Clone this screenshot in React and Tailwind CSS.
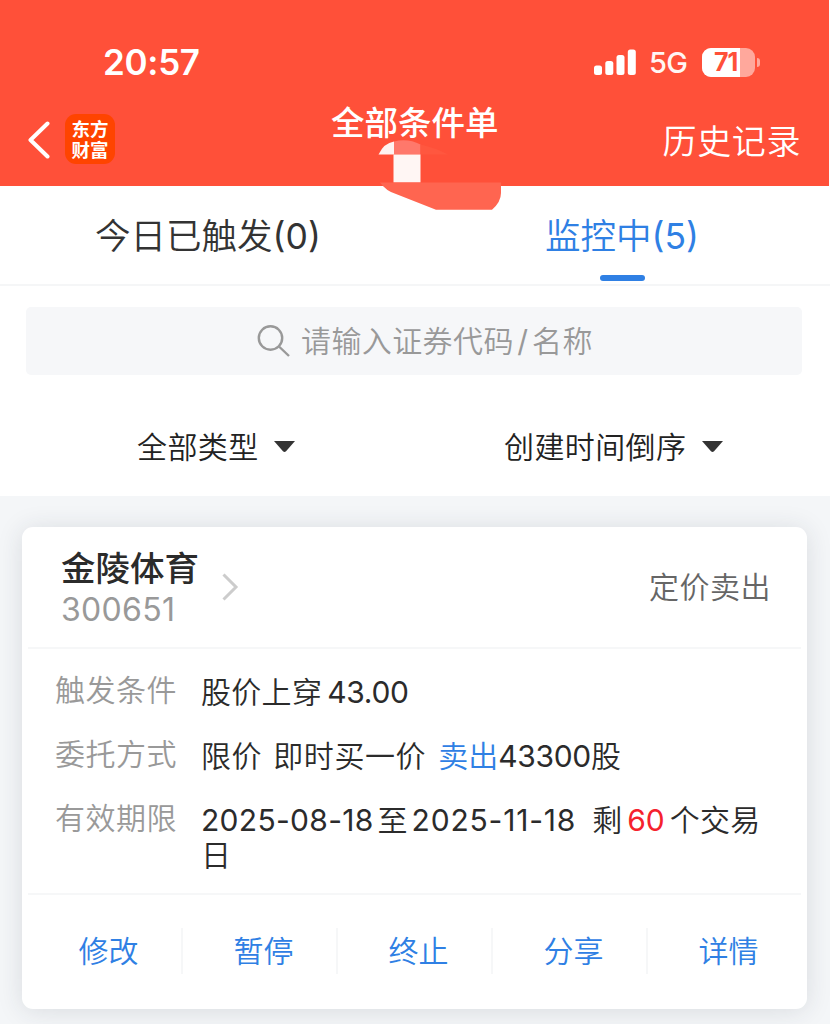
function Caret() {
  return (
    <svg width="21" height="12" viewBox="0 0 21 12" fill="#333">
      <path d="M0 0H21L12 10.2Q10.5 11.8 9 10.2Z" />
    </svg>
  );
}

function Num({ children, className = "" }) {
  return <span className={"font-normal " + className}>{children}</span>;
}

function StatusBar() {
  return (
    <div className="flex h-[92px] items-center pt-[32px] pl-[103px] pr-[69px] justify-between">
      <span className="text-[35px] leading-[60px] font-semibold tracking-[-0.3px]">20:57</span>
      <div className="flex items-center">
        <svg width="42" height="27" viewBox="0 0 42 27" fill="white">
          <rect x="0" y="16.500" width="8" height="9.500" rx="2.500" />
          <rect x="11.300" y="12" width="8" height="14" rx="2.500" />
          <rect x="22.500" y="6" width="8" height="20" rx="2.500" />
          <rect x="33.800" y="0.500" width="8" height="25.500" rx="2.500" />
        </svg>
        <span className="mt-[2px] ml-[13px] w-[40px] text-[29px] leading-[60px] font-medium tracking-[-0.6px] opacity-95">5G</span>
        <div className="ml-[13px] relative flex h-[29px] w-[53px] items-center overflow-hidden rounded-[9px] bg-white/50">
          <div className="h-full w-[38px] bg-white" />
          <span className="absolute left-[12px] text-[25px] leading-[29px] font-bold tracking-[-1px] text-[#ff5039]">71</span>
        </div>
        <div className="ml-[2px] h-[9px] w-[3px] rounded-r-full bg-white/50" />
      </div>
    </div>
  );
}

function NavBar() {
  return (
    <div className="relative flex h-[94px] items-start">
      <svg className="mt-[29px] ml-[27px]" width="24" height="38" viewBox="0 0 24 38" fill="none" stroke="white" strokeWidth="4" strokeLinecap="round" strokeLinejoin="round">
        <path d="M20.500 2.500L3.500 19L20.500 35.500" />
      </svg>
      <div className="mt-[22px] ml-[14px] h-[50px] w-[50px] rounded-[11px] bg-[#ff4400] pt-[4px] text-center font-['Noto_Sans_CJK_SC',sans-serif] text-[18.500px] leading-[21px] font-bold">
        东方<br />财富
      </div>
      <h1 className="ml-[216px] mt-[8px] w-[170px] text-[33.500px] leading-[46px] font-medium whitespace-nowrap">全部条件单</h1>
      <span className="ml-auto mr-[28px] mt-[26px] text-[34px] leading-[48px] tracking-[0.6px] font-[350] whitespace-nowrap">历史记录</span>
      <svg className="absolute left-[376px] top-[46px] z-10" width="128" height="74" viewBox="0 0 128 74">
        <path d="M2.500 16.500Q8 5 18 3.500V16.500Z" fill="#fff3f1" />
        <path d="M18 3.500Q32 0 44.500 6.500V16.500H18Z" fill="#ff786b" />
        <path d="M44.500 6.500Q60 10 72 16.500H44.500Z" fill="#ff573f" />
        <rect x="17.500" y="16.500" width="27" height="28" fill="#fff6f4" />
        <path d="M4 44.500H125V55Q125 64 116 71.700H60L20 56Q10 53 4 44.500Z" fill="#ff6550" />
      </svg>
    </div>
  );
}

function Tabs() {
  return (
    <div className="flex h-[100px] shrink-0 border-b-2 border-[#f5f6f7] text-[35.500px] leading-[50px] text-[#333]">
      <div className="flex w-[416px] justify-center pt-[26px] font-[350]">今日已触发<Num>(0)</Num></div>
      <div className="flex w-[412px] flex-col items-center pt-[26px] font-[350] text-[#2f80e4]">
        <span>监控中<Num>(5)</Num></span>
        <div className="mt-[13px] h-[6px] w-[45px] shrink-0 rounded-full bg-[#2f80e4]" />
      </div>
    </div>
  );
}

function Field({ label, children, className = "" }) {
  return (
    <div className={"flex leading-[35px] " + className}>
      <span className="-mt-[2px] w-[146px] shrink-0 text-[30px] tracking-[0.5px] text-[#999] font-[350]">{label}</span>
      <div className="w-[590px] shrink-0 text-[30px] font-[350] text-[#2b2b2b]">{children}</div>
    </div>
  );
}

function OrderCard() {
  const actions = ["修改", "暂停", "终止", "分享", "详情"];
  return (
    <div className="ml-[22px] mt-[31px] h-[482px] w-[785px] rounded-[11px] bg-white px-[6px] shadow-[0_2px_26px_rgba(40,50,60,0.13)]">
      <div className="flex h-[122px] items-center border-b-2 border-[#f6f7f8] pl-[33px] pr-[30px]">
        <div className="mt-[3px] flex w-[161px] flex-col">
          <span className="text-[34.500px] leading-[42px] font-medium text-[#2b2b2b]">金陵体育</span>
          <span className="text-[32px] leading-[40px] tracking-[0.3px] text-[#999]">300651</span>
        </div>
        <svg width="17" height="28" viewBox="0 0 17 28" fill="none" stroke="#ccc" strokeWidth="3">
          <path d="M1.500 1.500L14 14L1.500 26.500" />
        </svg>
        <span className="ml-auto text-[30px] tracking-[0.5px] text-[#666] font-[350]">定价卖出</span>
      </div>
      <div className="h-[246px] border-b-2 border-[#f6f7f8] pl-[27px] pt-[26px]">
        <Field label="触发条件" className="h-[64px]">
          <span className="tracking-[0.3px]">股价上穿</span><Num className="ml-[5px] tracking-[-0.3px]">43.00</Num>
        </Field>
        <Field label="委托方式" className="h-[64px]">
          <span className="tracking-[0.6px]">限价<span className="ml-[11px] mr-[12px]">即时买一价</span></span>
          <span className="text-[#2f80e4]">卖出</span><Num className="tracking-[-0.3px]">43300</Num>股
        </Field>
        <Field label="有效期限">
          <Num className="tracking-[0.3px]">2025-08-18</Num><span className="mx-[4px]">至</span><Num className="tracking-[0.8px]">2025-11-18</Num><span className="ml-[16px]">剩</span><Num className="mx-[5px] text-[#f5222d]">60</Num><span className="tracking-[0.3px]">个交易</span><br />日
        </Field>
      </div>
      <div className="flex h-[112px] items-center">
        {actions.map((a, i) => (
          <div key={a} className={"flex h-[46px] flex-1 items-center justify-center pl-[8px] text-[30px] font-[350] text-[#2f80e4] " + (i < 4 ? "border-r-2 border-[#f6f7f8]" : "")}>
            {a}
          </div>
        ))}
      </div>
    </div>
  );
}

export default function App() {
  return (
    <div className="flex h-[1024px] w-[830px] flex-col overflow-hidden bg-white font-['Inter','Noto_Sans_CJK_SC',sans-serif]">
      <header className="mr-px h-[186px] shrink-0 bg-[#ff5039] text-white">
        <StatusBar />
        <NavBar />
      </header>
      <Tabs />
      <div className="h-[210px] shrink-0 px-[26px] pt-[21px]">
        <div className="flex h-[68px] w-[776px] items-center rounded-[5px] bg-[#f6f7f9] pl-[231px] text-[#999]">
          <svg width="33" height="32" viewBox="0 0 33 32" fill="none" stroke="#999" strokeWidth="2.400">
            <circle cx="13.500" cy="13" r="11.700" />
            <path d="M22 21.500L32 31" />
          </svg>
          <span className="ml-[11px] text-[30px] tracking-[0.4px] font-[350]">请输入证券代码<Num className="mx-[3.500px]">/</Num>名称</span>
        </div>
        <div className="flex h-[144px] items-center text-[30px] tracking-[0.4px] font-[350] text-[#222]">
          <div className="flex w-[367px] items-center gap-[15px] pl-[111px]">全部类型<Caret /></div>
          <div className="flex items-center gap-[16px] pl-[111px]">创建时间倒序<Caret /></div>
        </div>
      </div>
      <main className="h-[528px] shrink-0 bg-[#f4f6f8] overflow-hidden">
        <OrderCard />
      </main>
    </div>
  );
}
